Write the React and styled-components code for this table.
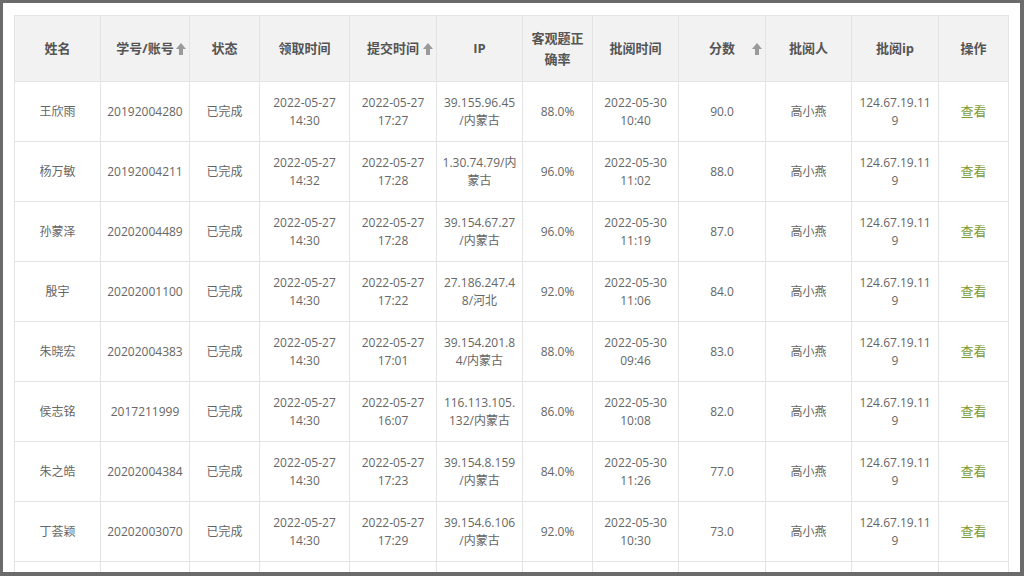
import styled, { createGlobalStyle } from "styled-components";

const GlobalStyle = createGlobalStyle`
	html, body {
		margin: 0;
		padding: 0;
		background: #6b6b6b;
		overflow: hidden;
	}
	body {
		font-family: "Open Sans", "Noto Sans CJK SC", sans-serif;
	}
`;

const columns = [
	{ key: "name", title: "姓名", width: 86 },
	{ key: "account", title: "学号/账号", width: 89, sort: true, pad: 4 },
	{ key: "status", title: "状态", width: 70 },
	{ key: "received", title: "领取时间", width: 90 },
	{ key: "submitted", title: "提交时间", width: 87, sort: true },
	{ key: "ip", title: "IP", width: 86, pad: 5 },
	{ key: "rate", title: "客观题正确率", width: 70 },
	{ key: "reviewed", title: "批阅时间", width: 86 },
	{ key: "score", title: "分数", width: 87, sort: true },
	{ key: "reviewer", title: "批阅人", width: 86 },
	{ key: "reviewIp", title: "批阅ip", width: 87, pad: 5 },
	{ key: "action", title: "操作", width: 70 },
];

const rows = [
	["王欣雨", "20192004280", "14:30", "17:27", "39.155.96.45/内蒙古", "88.0%", "10:40", "90.0"],
	["杨万敏", "20192004211", "14:32", "17:28", "1.30.74.79/内蒙古", "96.0%", "11:02", "88.0"],
	["孙蒙泽", "20202004489", "14:30", "17:28", "39.154.67.27/内蒙古", "96.0%", "11:19", "87.0"],
	["殷宇", "20202001100", "14:30", "17:22", "27.186.247.48/河北", "92.0%", "11:06", "84.0"],
	["朱晓宏", "20202004383", "14:30", "17:01", "39.154.201.84/内蒙古", "88.0%", "09:46", "83.0"],
	["侯志铭", "2017211999", "14:30", "16:07", "116.113.105.132/内蒙古", "86.0%", "10:08", "82.0"],
	["朱之皓", "20202004384", "14:30", "17:23", "39.154.8.159/内蒙古", "84.0%", "11:26", "77.0"],
	["丁荟颖", "20202003070", "14:30", "17:29", "39.154.6.106/内蒙古", "92.0%", "10:30", "73.0"],
].map(([name, account, rt, st, ip, rate, vt, score]) => ({
	name,
	account,
	status: "已完成",
	received: `2022-05-27 ${rt}`,
	submitted: `2022-05-27 ${st}`,
	ip,
	rate,
	reviewed: `2022-05-30 ${vt}`,
	score,
	reviewer: "高小燕",
	reviewIp: "124.67.19.119",
}));

function SortArrow() {
	return (
		<ArrowIcon width="10" height="12" viewBox="0 0 10 12">
			<path d="M5 0 L10 6 L7 6 L7 12 L3 12 L3 6 L0 6 Z" fill="#9a9a9a" />
		</ArrowIcon>
	);
}

export default function App() {
	return (
		<>
			<GlobalStyle />
			<Frame>
				<Table>
					<colgroup>
						{columns.map((c) => (
							<col key={c.key} style={{ width: c.width }} />
						))}
					</colgroup>
					<thead>
						<tr>
							{columns.map((c) => (
								<HeadCell key={c.key}>
									{c.title}
									{c.sort && <SortArrow />}
								</HeadCell>
							))}
						</tr>
					</thead>
					<tbody>
						{rows.map((r, i) => (
							<tr key={i}>
								{columns.map((c) =>
									c.key === "action" ? (
										<Cell key={c.key}>
											<ViewLink>查看</ViewLink>
										</Cell>
									) : (
										<Cell key={c.key} $pad={c.pad}>
											{r[c.key]}
										</Cell>
									)
								)}
							</tr>
						))}
						{/* next row, scrolled out of view */}
						<tr>
							{columns.map((c) => (
								<Cell key={c.key} />
							))}
						</tr>
					</tbody>
				</Table>
			</Frame>
		</>
	);
}

const Frame = styled.div`
	box-sizing: border-box;
	width: 1017px;
	height: 569px;
	margin: 3px 0 0 3px;
	padding: 12px 0 0 11px;
	background: #ffffff;
	overflow: hidden;
`;

const Table = styled.table`
	width: 994px;
	table-layout: fixed;
	border-collapse: collapse;
	border: 1px solid #e4e4e4;

	tr {
		height: 60px;
	}

	thead tr {
		height: 66px;
	}
`;

const HeadCell = styled.th`
	position: relative;
	padding: 0 8px;
	background: #f2f2f2;
	border: 1px solid #e4e4e4;
	color: #555;
	font-size: 13px;
	font-weight: 700;
	line-height: 21px;
	text-align: center;
`;

const ArrowIcon = styled.svg`
	position: absolute;
	right: 3px;
	top: 50%;
	margin-top: -6px;
`;

const Cell = styled.td`
	box-sizing: border-box;
	padding: 0 ${(p) => (p.$pad != null ? p.$pad : 6)}px;
	border: 1px solid #e4e4e4;
	color: #666;
	font-size: 12px;
	line-height: 18px;
	text-align: center;
	overflow-wrap: anywhere;
`;

const ViewLink = styled.a`
	color: #7d9c3a;
	font-size: 13px;
	cursor: pointer;
`;
